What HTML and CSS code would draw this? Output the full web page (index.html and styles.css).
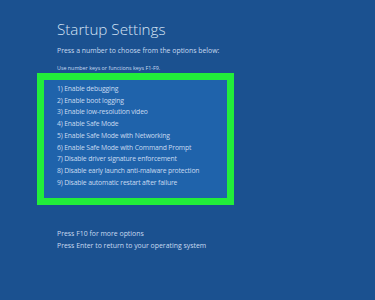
FILE: index.html
```html
<!DOCTYPE html>
<html lang="en">
<head>
    <meta charset="UTF-8">
    <title>Startup Settings</title>
    <link rel="stylesheet" href="styles.css">
</head>
<body>
    <div class="screen">
        <h1 class="title">Startup Settings</h1>
        <p class="prompt">Press a number to choose from the options below:</p>
        <p class="hint">Use number keys or functions keys F1-F9.</p>

        <!-- 選択肢 -->
        <ol class="options">
            <li>1) Enable debugging</li>
            <li>2) Enable boot logging</li>
            <li>3) Enable low-resolution video</li>
            <li>4) Enable Safe Mode</li>
            <li>5) Enable Safe Mode with Networking</li>
            <li>6) Enable Safe Mode with Command Prompt</li>
            <li>7) Disable driver signature enforcement</li>
            <li>8) Disable early launch anti-malware protection</li>
            <li>9) Disable automatic restart after failure</li>
        </ol>

        <div class="footer">
            <p>Press F10 for more options</p>
            <p>Press Enter to return to your operating system</p>
        </div>
    </div>
</body>
</html>
```

FILE: styles.css
```css
body, html {
    margin: 0;
    padding: 0;
    width: 100%;
    height: 100%;
    background-color: #1b5190;
    font-family: "Open Sans", "Noto Sans", sans-serif;
    color: #c9dbf1;
}

.screen {
    padding: 19px 0 0 57px;
}

.title {
    margin: 0;
    font-size: 15.2px;
    font-weight: 300;
    line-height: 20px;
    color: #d6e4f5;
}

.prompt {
    margin: 7px 0 0;
    font-size: 6.9px;
    line-height: 10px;
}

.hint {
    margin: 8px 0 0;
    font-size: 5.35px;
    line-height: 8px;
}

.options {
    list-style: none;
    margin: 1px 0 0 -20px;
    padding: 3px 13px 10px 13px;
    width: 157px;
    border: 7px solid #22ee3a;
    background-color: #1f63ab;
}

.options li {
    font-size: 6.8px;
    letter-spacing: -0.15px;
    line-height: 11.7px;
    white-space: nowrap;
}

.footer {
    margin-top: 23px;
}

.footer p {
    margin: 0;
    font-size: 6.9px;
    line-height: 12px;
}
```
